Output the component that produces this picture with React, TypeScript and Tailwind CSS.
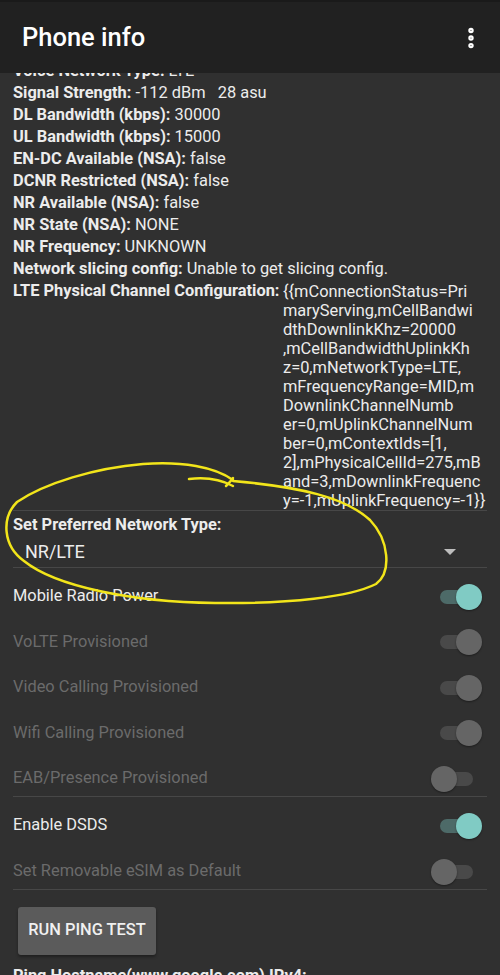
import { EllipsisVertical } from 'lucide-react'

const lteValue = [
  '{{mConnectionStatus=Pri',
  'maryServing,mCellBandwi',
  'dthDownlinkKhz=20000',
  ',mCellBandwidthUplinkKh',
  'z=0,mNetworkType=LTE,',
  'mFrequencyRange=MID,m',
  'DownlinkChannelNumb',
  'er=0,mUplinkChannelNum',
  'ber=0,mContextIds=[1,',
  '2],mPhysicalCellId=275,mB',
  'and=3,mDownlinkFrequenc',
  'y=-1,mUplinkFrequency=-1}}',
]

const info: [string, string][] = [
  ['Voice Network Type:', 'LTE'],
  ['Signal Strength:', '-112 dBm\u00a0\u00a0\u00a028 asu'],
  ['DL Bandwidth (kbps):', '30000'],
  ['UL Bandwidth (kbps):', '15000'],
  ['EN-DC Available (NSA):', 'false'],
  ['DCNR Restricted (NSA):', 'false'],
  ['NR Available (NSA):', 'false'],
  ['NR State (NSA):', 'NONE'],
  ['NR Frequency:', 'UNKNOWN'],
  ['Network slicing config:', 'Unable to get slicing config.'],
]

const Toggle = ({ on, enabled }: { on: boolean; enabled: boolean }) => (
  <div className="relative w-[51px] h-[26px]">
    <div
      className={`absolute left-[9px] top-[6px] w-[33px] h-[14px] rounded-full ${
        on && enabled ? 'bg-[#4d6a68]' : 'bg-[#494949]'
      }`}
    />
    <div
      className={`absolute top-0 w-[26px] h-[26px] rounded-full shadow-[0_1px_2px_rgba(0,0,0,0.4)] ${
        on ? 'right-0' : 'left-0'
      } ${on && enabled ? 'bg-[#80cbc4]' : 'bg-[#656565]'}`}
    />
  </div>
)

const SwitchRow = ({ label, on, enabled }: { label: string; on: boolean; enabled: boolean }) => (
  <div className="flex items-center justify-between h-[34px] pl-[13px] pr-[18px]">
    <span className={`text-[16.4px] ${enabled ? 'text-[#ececec]' : 'text-[#6b6b6b]'}`}>{label}</span>
    <Toggle on={on} enabled={enabled} />
  </div>
)

export default function App() {
  return (
    <div className="w-[500px] h-[975px] flex flex-col bg-[#303030] overflow-hidden font-['Roboto',sans-serif] text-[#ececec]">
      <header className="relative z-10 h-[73px] shrink-0 bg-[#212121] flex items-center justify-between pl-[22px] pr-[16px] border-t-2 border-[#1a1a1a]">
        <h1 className="text-[25.5px] font-medium text-white">Phone info</h1>
        <EllipsisVertical className="w-[26px] h-[26px] text-white" strokeWidth={3} />
      </header>

      <main className="relative flex-1 overflow-hidden">
        <div className="mt-[-13px] px-[13px] text-[16.4px]">
          {info.map(([k, v]) => (
            <div key={k} className="h-[22px] leading-[22px] whitespace-nowrap">
              <span className="font-bold">{k}</span> {v}
            </div>
          ))}
          <div className="flex">
            <div className="w-[270px] shrink-0 font-bold leading-[22px]">LTE Physical Channel Configuration:</div>
            <div className="pt-[1.5px] leading-[19px] whitespace-nowrap">
              {lteValue.map((l) => (
                <div key={l}>{l}</div>
              ))}
            </div>
          </div>
          <div className="h-px bg-[#474747] w-[474px]" />
          <div className="font-bold h-[24px] leading-[24px] mt-[2px]">Set Preferred Network Type:</div>
          <div className="flex items-center justify-between h-[30px] pl-[12px] pr-[31px]">
            <span className="text-[18px]">NR/LTE</span>
            <svg width="12" height="6" viewBox="0 0 12 6">
              <path d="M0 0h12L6 6z" fill="#bdbdbd" />
            </svg>
          </div>
          <div className="h-px bg-[#474747] w-[474px]" />
        </div>

        <div className="flex flex-col gap-[11.5px] mt-[12px]">
          <SwitchRow label="Mobile Radio Power" on enabled />
          <SwitchRow label="VoLTE Provisioned" on enabled={false} />
          <SwitchRow label="Video Calling Provisioned" on enabled={false} />
          <SwitchRow label="Wifi Calling Provisioned" on enabled={false} />
          <SwitchRow label="EAB/Presence Provisioned" on={false} enabled={false} />
        </div>
        <div className="h-px bg-[#474747] w-[474px] ml-[13px]" />
        <div className="flex flex-col gap-[12px] mt-[12px]">
          <SwitchRow label="Enable DSDS" on enabled />
          <SwitchRow label="Set Removable eSIM as Default" on={false} enabled={false} />
        </div>
        <div className="h-px bg-[#474747] w-[474px] ml-[13px]" />

        <button className="ml-[18px] mt-[17px] w-[138px] h-[48px] rounded-[3px] bg-[#5b5b5b] shadow-[0_2px_3px_rgba(0,0,0,0.35)] text-[16.4px] font-medium text-[#f0f0f0]">
          RUN PING TEST
        </button>
        <div className="px-[13px] mt-[10px] h-[22px] leading-[22px] text-[16.4px] font-bold whitespace-nowrap">
          Ping Hostname(www.google.com) IPv4:
        </div>

        <svg
          className="absolute left-0 top-0 pointer-events-none"
          width="500"
          height="902"
          viewBox="0 73 500 902"
          fill="none"
          stroke="#f2e51a"
          strokeWidth="2.5"
          strokeLinecap="round"
        >
          <path d="M189 479 C205 477 220 479 233 486" />
          <path d="M226 486 C229 483 231 481 233 478" />
          <path d="M233 480 C215 467 182 461 143 464 C95 468 45 483 17 502 C1 518 3 546 24 561 C55 586 130 602 215 603 C290 604 350 597 376 584 C392 572 389 540 370 520 C345 497 300 487 233 481" />
        </svg>
      </main>
    </div>
  )
}
